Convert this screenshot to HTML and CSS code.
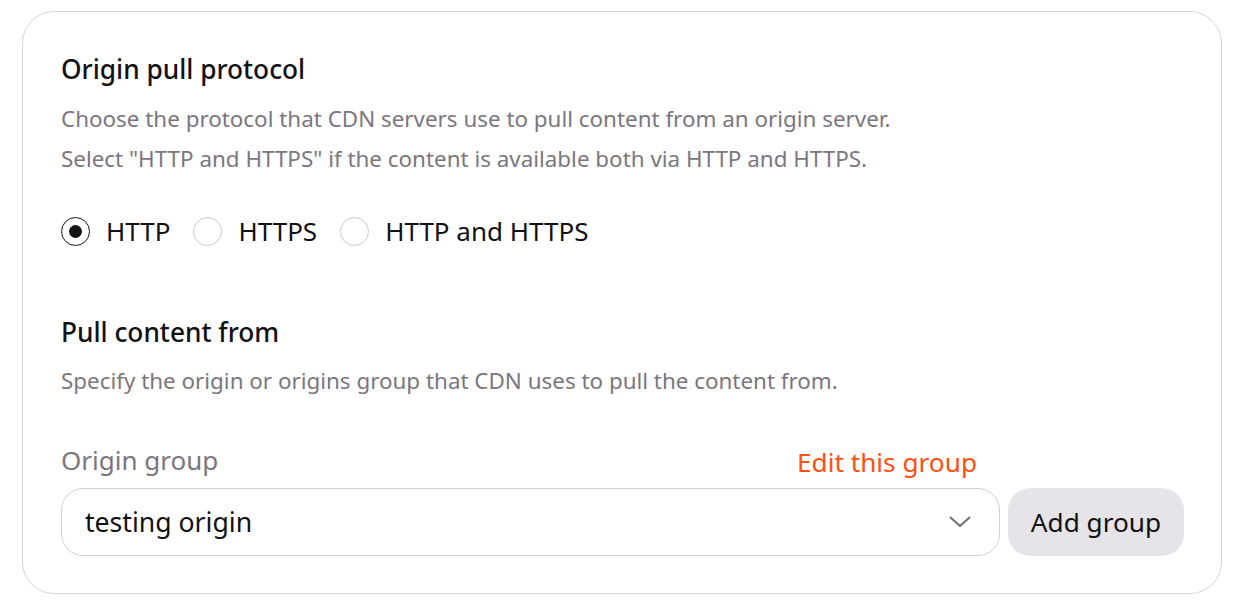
FILE: index.html
```html
<!DOCTYPE html>
<html lang="en">
<head>
<meta charset="utf-8">
<title>Origin settings</title>
<link rel="stylesheet" href="styles.css">
</head>
<body>
<div class="card">
  <section class="section">
    <h2 class="title">Origin pull protocol</h2>
    <p class="desc">Choose the protocol that CDN servers use to pull content from an origin server.</p>
    <p class="desc desc-next">Select "HTTP and HTTPS" if the content is available both via HTTP and HTTPS.</p>
    <div class="radios">
      <label class="radio"><span class="dot checked"></span><span class="rlabel">HTTP</span></label>
      <label class="radio"><span class="dot"></span><span class="rlabel">HTTPS</span></label>
      <label class="radio"><span class="dot"></span><span class="rlabel">HTTP and HTTPS</span></label>
    </div>
  </section>
  <section class="section section-two">
    <h2 class="title">Pull content from</h2>
    <p class="desc">Specify the origin or origins group that CDN uses to pull the content from.</p>
    <div class="field">
      <div class="field-main">
        <div class="field-head">
          <span class="field-label">Origin group</span>
          <a class="edit-link">Edit this group</a>
        </div>
        <div class="select">
          <span class="select-value">testing origin</span>
          <svg class="chevron" width="22" height="12" viewBox="0 0 22 12"><path d="M1.5 1.5 L11 10 L20.5 1.5" fill="none" stroke="#6f6c74" stroke-width="2" stroke-linecap="round" stroke-linejoin="round"/></svg>
        </div>
      </div>
      <button class="btn">Add group</button>
    </div>
  </section>
</div>
</body>
</html>
```

FILE: styles.css
```css
* { box-sizing: border-box; }
html, body { margin: 0; padding: 0; background: #ffffff; }
body {
  font-family: "Noto Sans", "Open Sans", sans-serif;
  color: #111014;
  padding: 11px 23px 0 22px;
}
.card {
  border: 1px solid #d6d5d8;
  border-radius: 32px;
  height: 583px;
  padding: 41px 37px 0 38px;
}
.title {
  margin: 0;
  font-size: 26.25px;
  font-weight: 500;
  line-height: 32px;
}
.desc {
  margin: 19px 0 0;
  font-size: 22.4px;
  line-height: 30px;
  color: #7b7680;
}
.desc-next { margin-top: 10px; }
.radios {
  display: flex;
  align-items: center;
  gap: 23px;
  margin-top: 42px;
}
.radio {
  display: flex;
  align-items: center;
  gap: 16px;
}
.dot {
  width: 29px;
  height: 29px;
  border-radius: 50%;
  border: 1.5px solid #c9c7cc;
  display: flex;
  align-items: center;
  justify-content: center;
}
.dot.checked { border-color: #141316; }
.dot.checked::after {
  content: "";
  width: 13px;
  height: 13px;
  border-radius: 50%;
  background: #141316;
}
.rlabel {
  font-size: 26px;
  line-height: 30px;
}
.section-two { margin-top: 70px; }
.section-two .desc { margin-top: 18px; }
.field {
  display: flex;
  align-items: flex-end;
  gap: 8px;
  margin-top: 47px;
}
.field-main { flex: 1; }
.field-head {
  display: flex;
  justify-content: space-between;
  align-items: baseline;
  height: 34px;
  margin-bottom: 11px;
}
.field-label {
  font-size: 26px;
  line-height: 34px;
  color: #7b7680;
}
.edit-link {
  font-size: 26.2px;
  line-height: 34px;
  color: #ff4f12;
  margin-right: 23px;
  position: relative;
  top: 2px;
}
.select {
  height: 68px;
  border: 1px solid #d0cfd3;
  border-radius: 22px;
  display: flex;
  align-items: center;
  justify-content: space-between;
  padding: 0 28px 0 23px;
}
.select-value { font-size: 26.6px; }
.btn {
  height: 68px;
  width: 176px;
  border: none;
  border-radius: 22px;
  background: #e6e4e9;
  font-family: inherit;
  font-size: 26.2px;
  color: #111014;
  padding: 0;
}
```
